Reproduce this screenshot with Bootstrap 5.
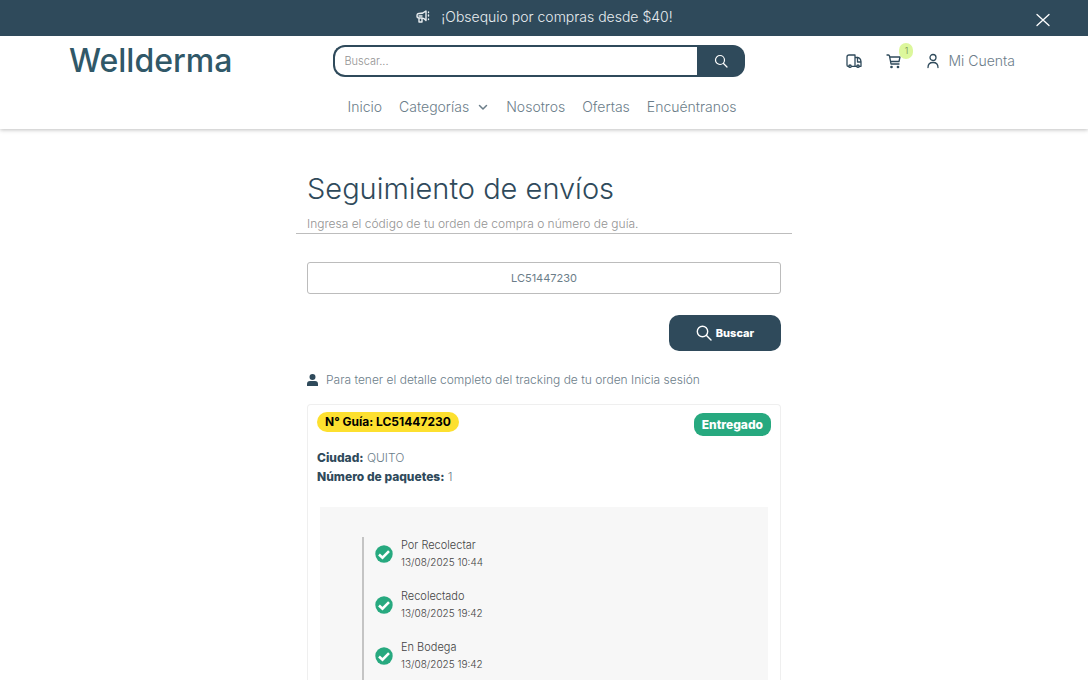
<!DOCTYPE html>
<html lang="es">
<head>
<meta charset="utf-8">
<meta name="viewport" content="width=device-width, initial-scale=1">
<title>Seguimiento de envíos | Wellderma</title>
<link href="https://cdn.jsdelivr.net/npm/bootstrap@5.3.0/dist/css/bootstrap.min.css" rel="stylesheet">
<style>
:root { --navy: #2f4a5b; --slate: #6b7d89; --green: #27a97f; }
body { font-family: Inter, "Open Sans", sans-serif; font-size: 12px; font-weight: 300; line-height: 18px; color: var(--slate); }
a { color: inherit; text-decoration: none; }
svg { flex: none; fill: none; stroke: currentColor; stroke-linecap: round; stroke-linejoin: round; }
.promo { background: var(--navy); color: #e8edf0; height: 36px; padding-bottom: 2px; font-size: 14px; }
.promo-close { right: 37px; top: 12px; line-height: 0; color: #fff; }
.site-head { box-shadow: 0 1px 4px rgba(0,0,0,.25); }
.head-inner { padding: 8px 9px 0 5px; }
.brand { font-size: 32px; font-weight: 500; line-height: 34px; color: #305868; }
.search-box { width: 412px; height: 32px; }
.search-box .form-control { border: 2px solid var(--navy); border-right: 0; border-radius: 12px 0 0 12px; font-size: 11px; font-weight: 300; padding: 0 9px; }
.search-box .form-control::placeholder { color: #929292; }
.search-box .btn { flex: none; width: 48px; background: var(--navy); border-radius: 0 12px 12px 0; color: #fff; padding: 0; line-height: 0; }
.tools { font-size: 14px; color: var(--slate); }
.tools svg { color: var(--navy); }
.cart-count { top: -10px; right: -11px; width: 14px; height: 16px; border-radius: 8px; background: #dcf79c; color: #6d8753; font-size: 9px; line-height: 16px; text-align: center; }
.menu { font-size: 14px; gap: 17px; padding: 20px 0 13px; }
.track { width: 100%; max-width: 496px; padding-top: 42px; }
.inset { padding-left: 11px; padding-right: 11px; }
.track h1 { font-size: 29px; font-weight: 300; line-height: 36px; color: var(--navy); margin: 0 0 8px; }
.intro { color: #939393; border-bottom: 1px solid #bdbdbd; margin-bottom: 28px; }
.code-input { height: 32px; border: 1px solid #bcbcbc; border-radius: 3px; font-size: 11px; text-align: center; color: var(--slate); }
.btn-find { width: 112px; height: 36px; background: var(--navy); color: #fff; border-radius: 10px; font-size: 11px; font-weight: 800; margin: 21px 0 20px; }
.btn-find:hover { background: #243b49; color: #fff; }
.result { border: 1px solid #efefef; border-bottom: 0; border-radius: 4px 4px 0 0; padding: 7px 9px 0; margin-top: 15px; }
.guide { background: #fde02f; color: #000; font-size: 12px; font-weight: 700; line-height: 20px; border-radius: 10px; padding: 0 8px; }
.state { background: var(--green); color: #fff; font-size: 12px; font-weight: 800; line-height: 23px; border-radius: 9px; padding: 0 8px; margin-top: 1px; }
.facts { margin: 12px 0 21px; line-height: 19px; }
.facts b { color: var(--navy); font-weight: 800; }
.steps-box { background: #f7f7f7; margin: 0 3px; padding: 30px 42px 0; }
.steps { border-left: 2px solid #c4c4c4; padding: 0 0 0 11px; color: #444; font-size: 11px; line-height: 17px; }
.steps li { padding-bottom: 17px; }
.steps time { display: block; font-size: 10px; }
</style>
</head>
<body class="d-flex flex-column min-vh-100">
<div class="promo position-relative d-flex justify-content-center align-items-center gap-2">
  <svg width="18" height="16" viewBox="0 0 18 16" stroke-width="1.4" aria-hidden="true"><path d="M11 2 C9 4 7 4.500 4 4.500 Q2 4.500 2 7 Q2 9 4 9 H7 Q9 9 11 11.500 Z M4 9 V13 H7 V9 M4 7h3M13.500 3v.5M13.500 6v1M13.500 10v.5"/></svg>
  <span>¡Obsequio por compras desde $40!</span>
  <button type="button" class="promo-close btn p-0 border-0 position-absolute" aria-label="Cerrar"><svg width="16" height="16" viewBox="0 0 16 16" stroke-width="1.3"><path d="M2 2.500l12 11M14 2.500l-12 11"/></svg></button>
</div>

<header class="site-head">
  <div class="container head-inner">
    <div class="d-flex justify-content-between align-items-center">
      <a href="#" class="brand">Wellderma</a>
      <form class="search-box d-flex" role="search">
        <input class="form-control" type="text" placeholder="Buscar..." aria-label="Buscar productos">
        <button class="btn" type="submit" aria-label="Buscar"><svg width="14" height="14" viewBox="0 0 14 14" stroke-width="1.2"><circle cx="6" cy="6" r="4.500"/><path d="M9.500 9.500l3.500 3.500"/></svg></button>
      </form>
      <div class="tools d-flex align-items-center">
        <a href="#" class="d-flex" aria-label="Rastrear pedido"><svg width="16" height="16" viewBox="0 0 16 16" stroke-width="1.300"><path d="M3 13.300H2Q1 13.300 1 12V4q0-2 2-2h6v11.300H5.500M9 4.500h2q3.500 0 4 4v4.800h-2M9 13.300h2M11.500 4.500V9H15"/><circle cx="4" cy="13.200" r="1.200"/><circle cx="12" cy="13.200" r="1.200"/></svg></a>
        <a href="#" class="d-flex position-relative ms-4" aria-label="Carrito"><svg width="16" height="16" viewBox="0 0 16 16" stroke-width="1.300"><path d="M1 2h1.500q.8 0 1 1l1.500 8h8M3.800 4H14l-1 4.500H4.700"/><circle cx="5.500" cy="14" r=".7"/><circle cx="12" cy="14" r=".7"/></svg><span class="cart-count position-absolute">1</span></a>
        <a href="#" class="d-flex align-items-center gap-2 ms-4"><svg width="14" height="16" viewBox="0 0 14 16" stroke-width="1.300"><circle cx="7" cy="4.500" r="3"/><path d="M2 14.500q0-5 5-5t5 5"/></svg>Mi Cuenta</a>
      </div>
    </div>
    <nav class="menu d-flex justify-content-center">
      <a href="#">Inicio</a>
      <a href="#" class="d-flex align-items-center gap-2">Categorías <svg width="12" height="12" viewBox="0 0 12 12" stroke-width="1.500"><path d="M2.500 4.500L6 8l3.500-3.500"/></svg></a>
      <a href="#">Nosotros</a>
      <a href="#">Ofertas</a>
      <a href="#">Encuéntranos</a>
    </nav>
  </div>
</header>

<main class="track mx-auto flex-grow-1 d-flex flex-column">
  <h1 class="inset">Seguimiento de envíos</h1>
  <p class="intro inset">Ingresa el código de tu orden de compra o número de guía.</p>
  <div class="inset flex-grow-1 d-flex flex-column">
    <form>
      <input class="form-control code-input" type="text" value="LC51447230" aria-label="Código de orden o número de guía">
      <div class="d-flex justify-content-end">
        <button class="btn btn-find d-flex justify-content-center align-items-center gap-1 p-0" type="submit"><svg width="16" height="16" viewBox="0 0 16 16" stroke-width="1.400"><circle cx="6.500" cy="6.500" r="5.200"/><path d="M10.500 10.500l4.500 4.500"/></svg>Buscar</button>
      </div>
    </form>
    <div class="d-flex align-items-center">
      <svg width="11" height="12" viewBox="0 0 11 12" class="me-2" style="color:var(--navy)" aria-hidden="true"><path fill="currentColor" stroke="none" d="M5.500 0a3 3 0 0 1 0 6a3 3 0 0 1 0-6M0 12V10Q0 7 3 7H8Q11 7 11 10V12Z"/></svg>
      <span>Para tener el detalle completo del tracking de tu orden <a href="#">Inicia sesión</a></span>
    </div>
    <section class="result flex-grow-1 d-flex flex-column">
      <div class="d-flex justify-content-between align-items-start">
        <span class="guide">N° Guía: LC51447230</span>
        <span class="state">Entregado</span>
      </div>
      <div class="facts">
        <div><b>Ciudad:</b> QUITO</div>
        <div><b>Número de paquetes:</b> 1</div>
      </div>
      <div class="steps-box flex-grow-1 d-flex">
        <ul class="steps list-unstyled mb-0">
          <li class="d-flex align-items-center gap-2"><svg width="18" height="18" viewBox="0 0 18 18" aria-hidden="true"><circle cx="9" cy="9" r="8.700" fill="#27a97f" stroke="none"/><path d="M4 9.500l3.500 3.200 6.500-6.500" stroke="#fff" stroke-width="2.600" stroke-linecap="butt" stroke-linejoin="miter"/></svg><div>Por Recolectar<time>13/08/2025 10:44</time></div></li>
          <li class="d-flex align-items-center gap-2"><svg width="18" height="18" viewBox="0 0 18 18" aria-hidden="true"><circle cx="9" cy="9" r="8.700" fill="#27a97f" stroke="none"/><path d="M4 9.500l3.500 3.200 6.500-6.500" stroke="#fff" stroke-width="2.600" stroke-linecap="butt" stroke-linejoin="miter"/></svg><div>Recolectado<time>13/08/2025 19:42</time></div></li>
          <li class="d-flex align-items-center gap-2"><svg width="18" height="18" viewBox="0 0 18 18" aria-hidden="true"><circle cx="9" cy="9" r="8.700" fill="#27a97f" stroke="none"/><path d="M4 9.500l3.500 3.200 6.500-6.500" stroke="#fff" stroke-width="2.600" stroke-linecap="butt" stroke-linejoin="miter"/></svg><div>En Bodega<time>13/08/2025 19:42</time></div></li>
        </ul>
      </div>
    </section>
  </div>
</main>
<script src="https://cdn.jsdelivr.net/npm/bootstrap@5.3.0/dist/js/bootstrap.bundle.min.js"></script>
</body>
</html>
